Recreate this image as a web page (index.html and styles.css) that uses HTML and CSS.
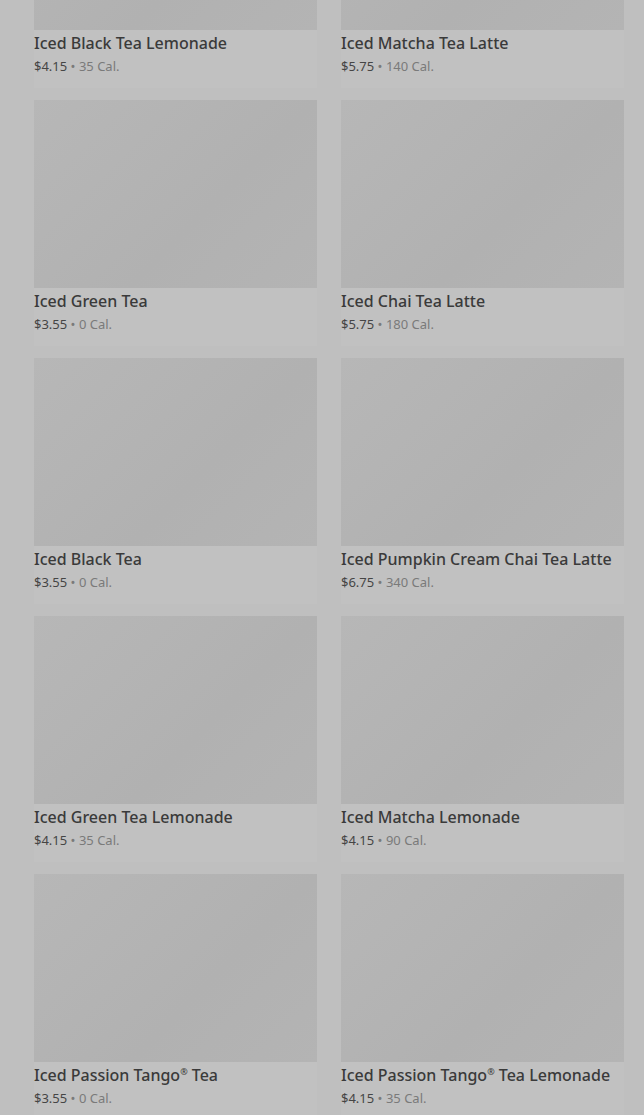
FILE: index.html
```html
<!DOCTYPE html>
<html lang="en">
<head>
    <meta charset="UTF-8">
    <meta name="viewport" content="width=device-width, initial-scale=1.0">
    <title>Iced Teas</title>
    <link rel="stylesheet" href="styles.css">
</head>
<body>

    <div class="menu">
        <div class="item">
            <div class="thumb"></div>
            <h3>Iced Black Tea Lemonade</h3>
            <p><span class="price">$4.15</span> &bull; <span class="cal">35 Cal.</span></p>
        </div>
        <div class="item">
            <div class="thumb"></div>
            <h3>Iced Matcha Tea Latte</h3>
            <p><span class="price">$5.75</span> &bull; <span class="cal">140 Cal.</span></p>
        </div>
        <div class="item">
            <div class="thumb"></div>
            <h3>Iced Green Tea</h3>
            <p><span class="price">$3.55</span> &bull; <span class="cal">0 Cal.</span></p>
        </div>
        <div class="item">
            <div class="thumb"></div>
            <h3>Iced Chai Tea Latte</h3>
            <p><span class="price">$5.75</span> &bull; <span class="cal">180 Cal.</span></p>
        </div>
        <div class="item">
            <div class="thumb"></div>
            <h3>Iced Black Tea</h3>
            <p><span class="price">$3.55</span> &bull; <span class="cal">0 Cal.</span></p>
        </div>
        <div class="item">
            <div class="thumb"></div>
            <h3>Iced Pumpkin Cream Chai Tea Latte</h3>
            <p><span class="price">$6.75</span> &bull; <span class="cal">340 Cal.</span></p>
        </div>
        <div class="item">
            <div class="thumb"></div>
            <h3>Iced Green Tea Lemonade</h3>
            <p><span class="price">$4.15</span> &bull; <span class="cal">35 Cal.</span></p>
        </div>
        <div class="item">
            <div class="thumb"></div>
            <h3>Iced Matcha Lemonade</h3>
            <p><span class="price">$4.15</span> &bull; <span class="cal">90 Cal.</span></p>
        </div>
        <div class="item">
            <div class="thumb"></div>
            <h3>Iced Passion Tango<sup>&reg;</sup> Tea</h3>
            <p><span class="price">$3.55</span> &bull; <span class="cal">0 Cal.</span></p>
        </div>
        <div class="item">
            <div class="thumb"></div>
            <h3>Iced Passion Tango<sup>&reg;</sup> Tea Lemonade</h3>
            <p><span class="price">$4.15</span> &bull; <span class="cal">35 Cal.</span></p>
        </div>
    </div>

</body>
</html>
```
FILE: styles.css
```css
/* General reset */
* {
    margin: 0;
    padding: 0;
    box-sizing: border-box;
}

body {
    background-color: #bfbfbf;
    font-family: "Noto Sans", Arial, sans-serif;
    overflow: hidden;
}

.menu {
    display: grid;
    grid-template-columns: 283px 283px;
    column-gap: 24px;
    row-gap: 12px;
    padding: 0 20px 0 34px;
    margin-top: -158px;
}

.item {
    background-color: #c1c1c1;
    height: 246px;
}

.thumb {
    height: 188px;
    background: linear-gradient(135deg, #b7b7b7, #b1b1b1 60%, #b4b4b4);
}

h3 {
    margin-top: 2px;
    font-size: 16px;
    font-weight: 500;
    line-height: 22px;
    color: #3a3a3a;
}

h3 sup {
    font-size: 9px;
    line-height: 0;
    vertical-align: 6px;
}

p {
    margin-top: 3px;
    font-size: 13px;
    line-height: 18px;
    color: #7a7a7a;
}

.price {
    color: #454545;
}

.cal {
    color: #7a7a7a;
}
```
